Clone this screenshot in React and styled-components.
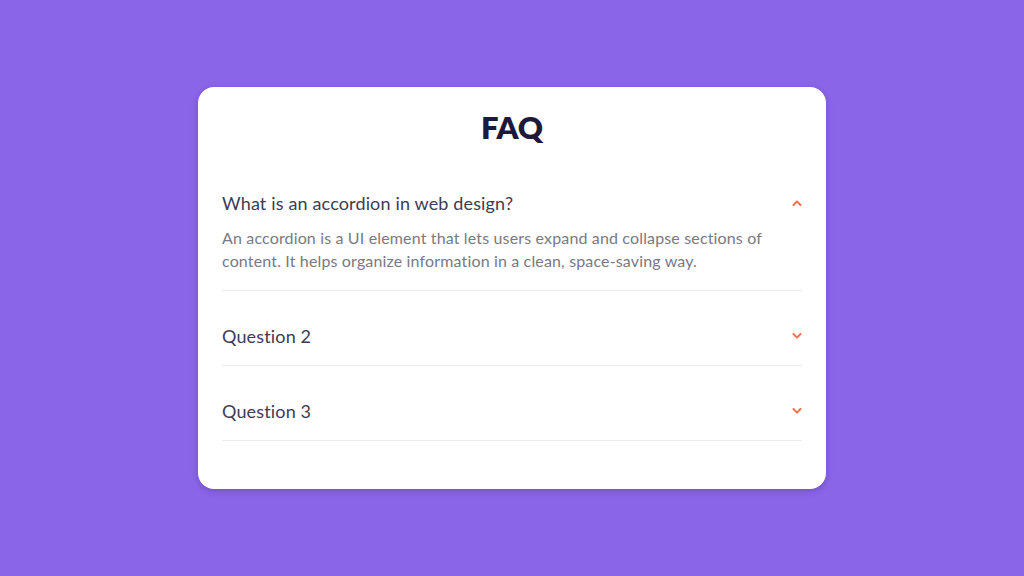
import React, { useState } from 'react'
import styled, { createGlobalStyle } from 'styled-components'

const GlobalStyle = createGlobalStyle`
  html, body {
    margin: 0;
    padding: 0;
  }
  body {
    background: #8a65e7;
    font-family: Lato, "Open Sans", sans-serif;
  }
`

const Page = styled.div`
  min-height: 100vh;
  display: flex;
  align-items: center;
  justify-content: center;
`

const Card = styled.div`
  width: 628px;
  box-sizing: border-box;
  background: #ffffff;
  border-radius: 16px;
  padding: 20px 24px 48px;
  box-shadow: 0 2px 6px rgba(40, 20, 120, 0.25);
`

const Title = styled.h1`
  margin: 0 0 27px;
  text-align: center;
  font-size: 31px;
  line-height: 40px;
  font-weight: 800;
  color: #1c1a3a;
`

const Item = styled.div`
  margin-top: 16px;
  padding: 18px 0;
  border-bottom: 1px solid #ececef;
`

const Question = styled.button`
  width: 100%;
  display: flex;
  align-items: center;
  justify-content: space-between;
  padding: 0;
  border: none;
  background: none;
  cursor: pointer;
  font-family: inherit;
  font-size: 18px;
  line-height: 22px;
  letter-spacing: 0.15px;
  color: #3d3c52;
  text-align: left;
`

const Answer = styled.p`
  margin: 12px 0 0;
  font-size: 16px;
  line-height: 23px;
  letter-spacing: 0.15px;
  color: #7a7984;
`

const Chevron = ({ open }) => (
  <svg
    width="10"
    height="6"
    viewBox="0 0 10 6"
    style={{ transform: open ? 'rotate(180deg)' : 'none' }}
  >
    <polyline
      points="1.5,1 5,4.6 8.5,1"
      fill="none"
      stroke="#f4724a"
      strokeWidth="2"
      strokeLinecap="round"
      strokeLinejoin="round"
    />
  </svg>
)

const faqs = [
  {
    q: 'What is an accordion in web design?',
    a: 'An accordion is a UI element that lets users expand and collapse sections of content. It helps organize information in a clean, space-saving way.',
  },
  { q: 'Question 2', a: 'Answer 2' },
  { q: 'Question 3', a: 'Answer 3' },
]

export default function App() {
  const [open, setOpen] = useState(0)

  return (
    <Page>
      <GlobalStyle />
      <Card>
        <Title>FAQ</Title>
        {faqs.map((f, i) => (
          <Item key={i}>
            <Question onClick={() => setOpen(open === i ? -1 : i)}>
              {f.q}
              <Chevron open={open === i} />
            </Question>
            {open === i && <Answer>{f.a}</Answer>}
          </Item>
        ))}
      </Card>
    </Page>
  )
}
